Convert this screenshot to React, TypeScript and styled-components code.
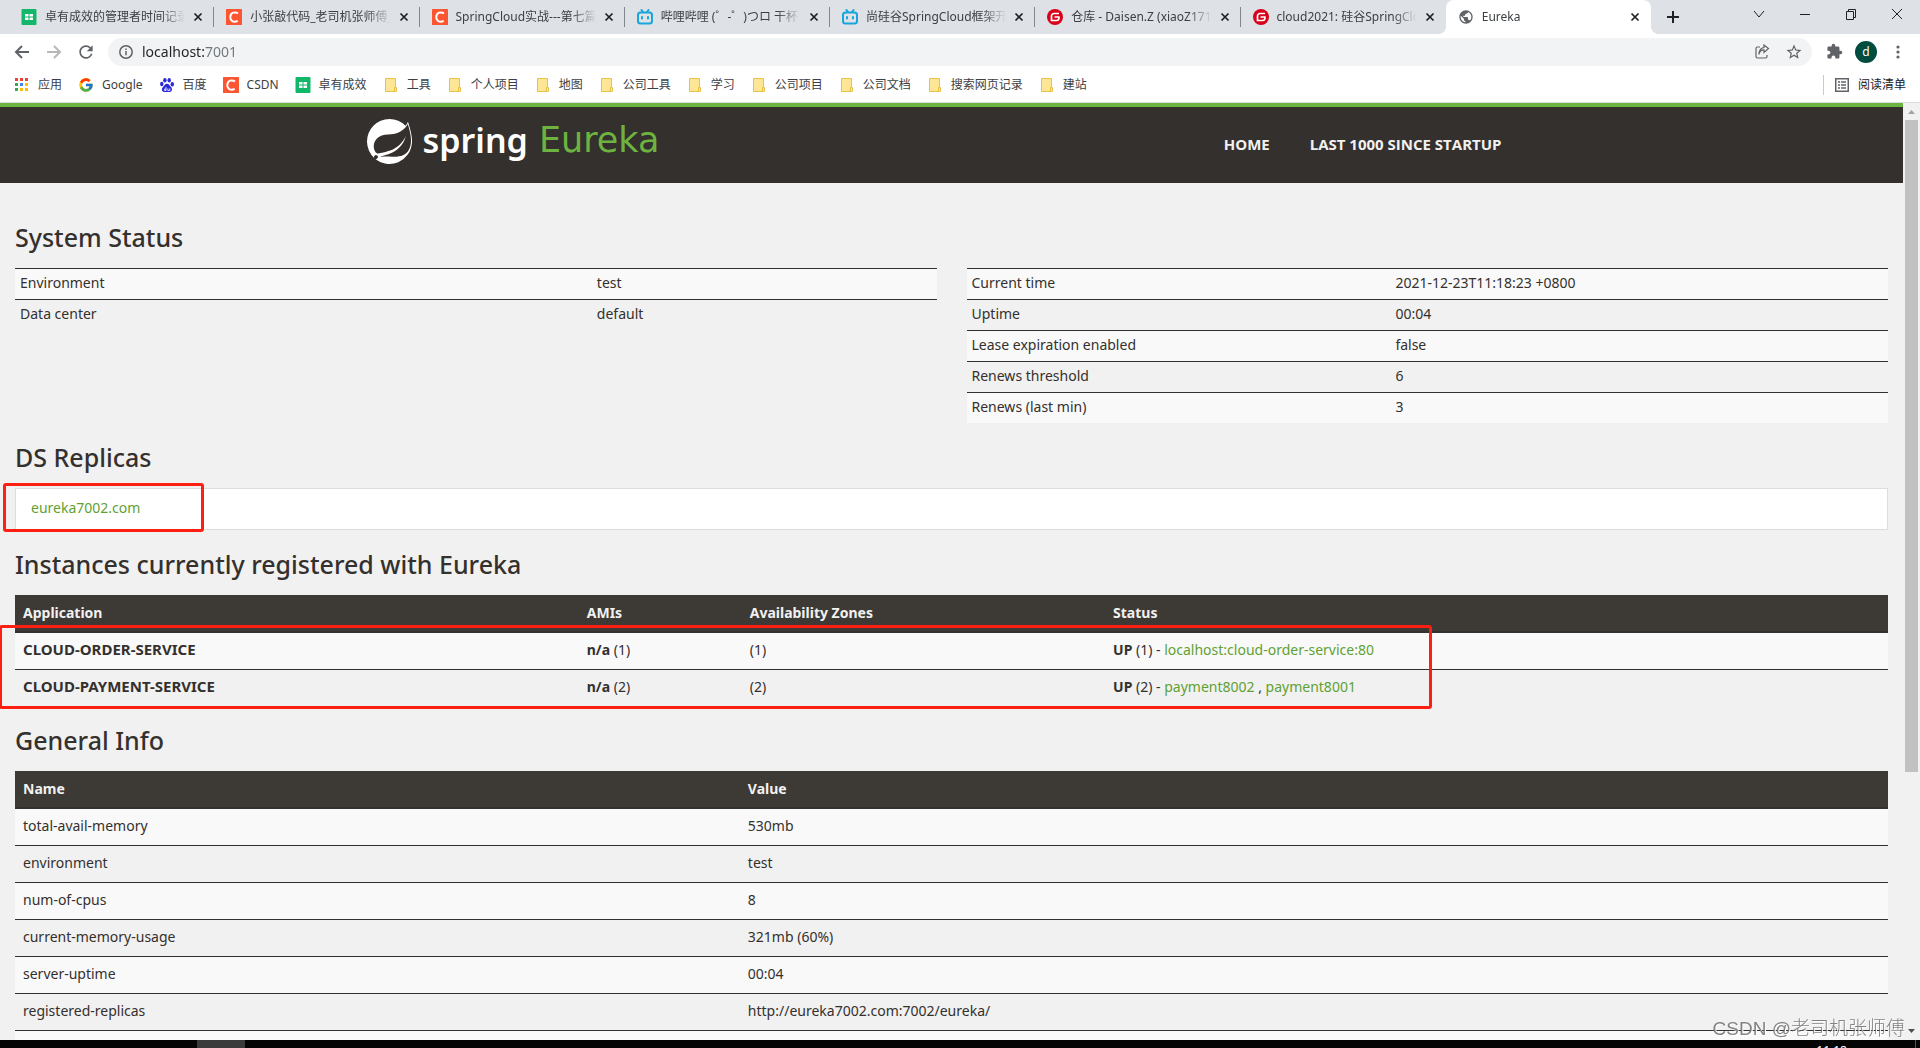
import React from "react";
import styled, { createGlobalStyle, css } from "styled-components";
import { SiSpring } from "react-icons/si";
import { FcGoogle } from "react-icons/fc";
import { MdExtension, MdStarBorder, MdPublic, MdRefresh } from "react-icons/md";

const color = {
  strip: "#dee1e6",
  pill: "#f1f3f4",
  icon: "#5f6368",
  chromeText: "#3c4043",
  page: "#f1f1f1",
  stripe: "#f9f9f9",
  ink: "#34302d",
  head: "#3d3934",
  green: "#6db33f",
  link: "#5fa134",
  mark: "#ff1f12",
};

const GlobalStyle = createGlobalStyle`
  * { box-sizing: border-box; }
  body { margin: 0; background: ${color.page}; }
  button { border: 0; padding: 0; background: none; font: inherit; color: inherit; }
  a { text-decoration: none; }
`;

const Window = styled.div`
  display: flex;
  flex-direction: column;
  height: 100vh;
  overflow: hidden;
  font-family: "Noto Sans", "Noto Sans CJK SC", sans-serif;
`;

/* ---------- browser chrome ---------- */

const TabStrip = styled.div`
  display: flex;
  flex: none;
  height: 34px;
  padding-left: 9px;
  background: ${color.strip};
  color: ${color.chromeText};
  font-size: 12px;
`;

const Tabs = styled.div`
  display: flex;
  flex: 1;
  max-width: 1642px;
`;

const Tab = styled.div<{ $active?: boolean; $divider?: boolean }>`
  position: relative;
  display: flex;
  flex: 1;
  min-width: 0;
  align-items: center;
  padding: 0 8px 0 12px;
  ${(p) =>
    p.$active &&
    css`
      background: #fff;
      border-radius: 8px 8px 0 0;
      &::before,
      &::after {
        content: "";
        position: absolute;
        bottom: 0;
        width: 8px;
        height: 8px;
      }
      &::before {
        left: -8px;
        background: radial-gradient(circle at 0 0, transparent 8px, #fff 8px);
      }
      &::after {
        right: -8px;
        background: radial-gradient(circle at 100% 0, transparent 8px, #fff 8px);
      }
    `}
  ${(p) =>
    p.$divider &&
    css`
      &::after {
        content: "";
        position: absolute;
        right: 0;
        top: 7px;
        width: 1px;
        height: 20px;
        background: #80868b;
      }
    `}
`;

const TabTitle = styled.button`
  flex: 1;
  min-width: 0;
  margin: 0 5px 0 8px;
  overflow: hidden;
  white-space: nowrap;
  text-align: left;
  line-height: 20px;
  mask-image: linear-gradient(to right, #000 calc(100% - 24px), transparent);
`;

const IconButton = styled.button<{ $w?: number }>`
  display: flex;
  flex: none;
  align-items: center;
  justify-content: center;
  width: ${(p) => p.$w ?? 16}px;
  color: ${color.icon};
  &:disabled {
    opacity: 0.45;
  }
`;

const StripButton = styled(IconButton)`
  color: #202124;
`;

const WindowButtons = styled.div`
  display: flex;
  margin-left: auto;
  padding-bottom: 6px;
`;

const Toolbar = styled.div`
  display: flex;
  flex: none;
  align-items: center;
  height: 35px;
  padding: 0 6px;
  background: #fff;
`;

const AddressBar = styled.div`
  display: flex;
  flex: 1;
  align-items: center;
  height: 28px;
  margin: 0 6px;
  padding: 0 2px 0 10px;
  border-radius: 14px;
  background: ${color.pill};
`;

const AddressInput = styled.input`
  flex: 1;
  min-width: 0;
  margin-left: 8px;
  padding: 0;
  border: 0;
  outline: 0;
  font: 14px/20px "Noto Sans", sans-serif;
  background: linear-gradient(to right, #202124 62px, #70757a 62px);
  background-clip: text;
  color: transparent;
`;

const Avatar = styled.button`
  width: 22px;
  height: 22px;
  margin: 0 5px;
  border-radius: 50%;
  background: #004d40;
  color: #fff;
  font-size: 12px;
  line-height: 20px;
`;

const Bookmarks = styled.nav`
  display: flex;
  flex: none;
  align-items: center;
  gap: 16px;
  height: 34px;
  padding: 0 14px 1px;
  border-bottom: 1px solid #dadce0;
  background: #fff;
  font-size: 12px;
`;

const Bookmark = styled.a`
  display: flex;
  align-items: center;
  gap: 8px;
  line-height: 20px;
  color: ${color.chromeText};
  white-space: nowrap;
`;

const ReadingList = styled.button`
  display: flex;
  align-items: center;
  gap: 9px;
  margin-left: auto;
  padding-left: 11px;
  border-left: 1px solid #c8cacd;
  line-height: 20px;
  color: #202124;
`;

/* ---------- viewport ---------- */

const Viewport = styled.div`
  display: flex;
  flex: 1;
  min-height: 0;
`;

const Page = styled.div`
  flex: 1;
  min-width: 0;
  overflow: hidden;
  background: ${color.page};
  color: ${color.ink};
  font-family: "Noto Sans", sans-serif;
  font-size: 14px;
  line-height: 20px;
`;

const ScrollTrack = styled.div`
  display: flex;
  flex-direction: column;
  align-items: center;
  width: 17px;
  background: ${color.page};
`;

const ScrollThumb = styled.div`
  width: 13px;
  flex: 0 0 69.6%;
  margin-bottom: auto;
  background: #c1c1c1;
`;

const Header = styled.header`
  border-top: 4px solid ${color.green};
  background: ${color.ink};
`;

const HeaderInner = styled.div`
  display: flex;
  align-items: center;
  justify-content: space-between;
  max-width: 1170px;
  height: 76px;
  margin: 0 auto;
  padding-bottom: 7px;
`;

const Brand = styled.a`
  display: flex;
  align-items: center;
  gap: 11px;
  color: #fff;
  line-height: 40px;
`;

const BrandName = styled.span`
  padding-bottom: 4px;
  font-size: 34px;
  font-weight: 600;
`;

const BrandProduct = styled.span`
  padding-bottom: 4px;
  font-family: "DejaVu Sans", sans-serif;
  font-size: 35px;
  color: ${color.green};
`;

const Menu = styled.nav`
  display: flex;
  gap: 40px;
  padding: 5px 35px 0 0;
`;

const MenuLink = styled.a`
  color: #f1f1f1;
  font-family: "Open Sans", sans-serif;
  font-size: 15px;
  font-weight: 700;
  text-transform: uppercase;
`;

const Main = styled.main`
  padding: 20px 15px 0;
`;

const Section = styled.section`
  position: relative;
  margin-top: 21px;
`;

const Heading = styled.h1`
  margin: 0 0 18px;
  font-family: "Noto Sans", sans-serif;
  font-size: 25px;
  font-weight: 500;
  line-height: 26px;
`;

const Columns = styled.div`
  display: grid;
  grid-template-columns: 1fr 1fr;
  align-items: start;
  gap: 30px;
`;

const Table = styled.table`
  width: 100%;
  table-layout: fixed;
  border-spacing: 0;
  text-align: left;
  tbody tr:nth-child(odd) {
    background: ${color.stripe};
  }
`;

const StatusTable = styled(Table)`
  td {
    padding: 4px 5px 6px;
    border-top: 1px solid ${color.ink};
  }
`;

const DataTable = styled(Table)`
  th {
    padding: 8px;
    background: ${color.head};
    border-bottom: 2px solid ${color.ink};
    color: #f1f1f1;
  }
  td {
    padding: 7px 8px 9px;
    border-bottom: 1px solid ${color.ink};
  }
`;

const InstanceTable = styled(DataTable)`
  tbody tr:last-child td {
    border-bottom: 0;
  }
`;

const AppName = styled.b`
  font-size: 15px;
  line-height: 1;
`;

const Replicas = styled.ul`
  margin: 0;
  padding: 0;
  list-style: none;
`;

const Replica = styled.li`
  padding: 9px 15px 11px;
  border: 1px solid #ddd;
  background: #fff;
`;

const Link = styled.a`
  color: ${color.link};
`;

const Mark = styled.div<{ $left: number; $top: number; $width: number; $height: number }>`
  position: absolute;
  left: ${(p) => p.$left}px;
  top: ${(p) => p.$top}px;
  width: ${(p) => p.$width}px;
  height: ${(p) => p.$height}px;
  border: 3px solid ${color.mark};
  border-radius: 3px;
  pointer-events: none;
`;

/* ---------- desktop ---------- */

const Taskbar = styled.footer`
  display: flex;
  flex: none;
  height: 8px;
  padding: 0 4px 0 197px;
  overflow: hidden;
  background: #050505;
`;

const TaskItem = styled.div`
  width: 48px;
  background: #3b3b3b;
`;

const Clock = styled.time`
  margin-left: auto;
  padding: 3px 68px 0 0;
  border-right: 1px solid #555;
  color: #fff;
  font-size: 12px;
  line-height: 16px;
`;

const Watermark = styled.div`
  position: fixed;
  right: 15px;
  bottom: 7px;
  color: rgba(110, 110, 110, 0.85);
  font: 19px/24px "Liberation Sans", "Noto Sans CJK SC", sans-serif;
  font-weight: 300;
  text-shadow: 1px 1px 0 #fff;
`;

/* ---------- icons ---------- */

const SheetIcon = () => (
  <svg width="16" height="16" viewBox="0 0 16 16">
    <rect x="0.5" width="15" height="16" rx="1" fill="#12b76a" />
    <path d="M4 5h3.5v2.5H4zM8.5 5H12v2.5H8.5zM4 8.5h3.5V11H4zM8.5 8.5H12V11H8.5z" fill="#fff" />
  </svg>
);

const CsdnIcon = () => (
  <svg width="16" height="16" viewBox="0 0 16 16">
    <rect width="16" height="16" rx="0.5" fill="#fc5531" />
    <path d="M12 4.4C9 2.6 4.6 3.2 4.3 7.9c-.2 4.8 4.1 5.7 7.4 4" fill="none" stroke="#fff" strokeWidth="1.9" />
  </svg>
);

const BilibiliIcon = () => (
  <svg width="16" height="16" viewBox="0 0 16 16" fill="none" stroke="#17a5dc" strokeWidth="2" strokeLinecap="round">
    <path d="M4.5 1l1.5 2M11.5 1L10 3" />
    <rect x="1" y="3.5" width="14" height="11" rx="2.5" />
    <path d="M5 8v1.5M11 8v1.5" />
  </svg>
);

const GiteeIcon = () => (
  <svg width="16" height="16" viewBox="0 0 16 16">
    <circle cx="8" cy="8" r="8" fill="#d8001b" />
    <path d="M12 4.5H7A2.5 2.5 0 0 0 4.5 7v4.5h5.2A2.2 2.2 0 0 0 11.9 9.3V8H7.5" fill="none" stroke="#fff" strokeWidth="1.7" />
  </svg>
);

const BaiduIcon = () => (
  <svg width="16" height="16" viewBox="0 0 16 16" fill="#2a2ad8">
    <ellipse cx="2.8" cy="7" rx="1.7" ry="2.2" />
    <ellipse cx="5.9" cy="3.2" rx="1.7" ry="2.3" />
    <ellipse cx="10.2" cy="3.2" rx="1.7" ry="2.3" />
    <ellipse cx="13.3" cy="7.2" rx="1.7" ry="2.2" />
    <path d="M8 6.8c2 0 2.4 1.8 3.8 3 1.8 1.5 1.6 5-.9 5.2-1.6.1-4 .1-5.8 0-2.6-.2-2.8-3.6-.9-5.2C5.6 8.6 6 6.8 8 6.8z" />
    <path d="M7 10v3.5H5.6V12H7M8.8 11.4v2.1h2v-2.1" fill="none" stroke="#fff" strokeWidth="0.8" />
  </svg>
);

const AppsIcon = () => (
  <svg width="16" height="16" viewBox="0 0 16 16">
    {["#ea4335", "#ea4335", "#ea4335", "#34a853", "#4285f4", "#fbbc04", "#34a853", "#fbbc04", "#fbbc04"].map((fill, i) => (
      <rect key={i} x={1 + (i % 3) * 5} y={1 + Math.floor(i / 3) * 5} width="3" height="3" fill={fill} />
    ))}
  </svg>
);

const FolderIcon = () => (
  <svg width="16" height="16" viewBox="0 0 16 16">
    <path d="M2.5 1.5h10v9h1v4h-11z" fill="#ffe694" stroke="#e8c34a" />
    <path d="M11.5 14v-3.5h1" fill="none" stroke="#e8c34a" />
  </svg>
);

const Stroke = ({ d, size = 16, width = 1 }: { d: string; size?: number; width?: number }) => (
  <svg width={size} height={size} viewBox="0 0 16 16" fill="none" stroke="currentColor" strokeWidth={width}>
    <path d={d} />
  </svg>
);

const InfoIcon = () => (
  <svg width="16" height="16" viewBox="0 0 16 16" fill="none" stroke={color.icon} strokeWidth="1.5">
    <circle cx="8" cy="8" r="6.2" />
    <path d="M8 7v4.2M8 4.5v1.5" />
  </svg>
);

const ListIcon = () => (
  <svg width="14" height="14" viewBox="0 0 14 14" fill="none" stroke={color.icon} strokeWidth="1.5">
    <rect x="0.75" y="0.75" width="12.5" height="12.5" />
    <path d="M3 4h2M6 4h5M3 7h2M6 7h5M3 10h2M6 10h5" />
  </svg>
);

/* ---------- data ---------- */

const tabs = [
  { icon: <SheetIcon />, title: "卓有成效的管理者时间记录" },
  { icon: <CsdnIcon />, title: "小张敲代码_老司机张师傅_" },
  { icon: <CsdnIcon />, title: "SpringCloud实战---第七篇" },
  { icon: <BilibiliIcon />, title: "哔哩哔哩 (゜-゜)つロ 干杯" },
  { icon: <BilibiliIcon />, title: "尚硅谷SpringCloud框架开" },
  { icon: <GiteeIcon />, title: "仓库 - Daisen.Z (xiaoZ171" },
  { icon: <GiteeIcon />, title: "cloud2021: 硅谷SpringClo" },
  { icon: <MdPublic size={16} color={color.icon} />, title: "Eureka" },
];

const bookmarks = [
  { icon: <AppsIcon />, label: "应用" },
  { icon: <FcGoogle size={16} />, label: "Google" },
  { icon: <BaiduIcon />, label: "百度" },
  { icon: <CsdnIcon />, label: "CSDN" },
  { icon: <SheetIcon />, label: "卓有成效" },
  ...["工具", "个人项目", "地图", "公司工具", "学习", "公司项目", "公司文档", "搜索网页记录", "建站"].map((label) => ({
    icon: <FolderIcon />,
    label,
  })),
];

const environment = [
  ["Environment", "test"],
  ["Data center", "default"],
];

const runtime = [
  ["Current time", "2021-12-23T11:18:23 +0800"],
  ["Uptime", "00:04"],
  ["Lease expiration enabled", "false"],
  ["Renews threshold", "6"],
  ["Renews (last min)", "3"],
];

const instances = [
  { name: "CLOUD-ORDER-SERVICE", count: 1, nodes: ["localhost:cloud-order-service:80"] },
  { name: "CLOUD-PAYMENT-SERVICE", count: 2, nodes: ["payment8002", "payment8001"] },
];

const info = [
  ["total-avail-memory", "530mb"],
  ["environment", "test"],
  ["num-of-cpus", "8"],
  ["current-memory-usage", "321mb (60%)"],
  ["server-uptime", "00:04"],
  ["registered-replicas", "http://eureka7002.com:7002/eureka/"],
  ["", ""],
];

const Pairs = ({ rows, first }: { rows: string[][]; first: string }) => (
  <StatusTable>
    <colgroup>
      <col style={{ width: first }} />
      <col />
    </colgroup>
    <tbody>
      {rows.map(([name, value]) => (
        <tr key={name}>
          <td>{name}</td>
          <td>{value}</td>
        </tr>
      ))}
    </tbody>
  </StatusTable>
);

const CLOSE = "M4 4l8 8M12 4l-8 8";

export default function App() {
  return (
    <Window>
      <GlobalStyle />
      <TabStrip>
        <Tabs>
          {tabs.map((tab, i) => (
            <Tab key={tab.title} $active={i === 7} $divider={i < 6}>
              {tab.icon}
              <TabTitle>{tab.title}</TabTitle>
              <StripButton aria-label="Close tab">
                <Stroke d={CLOSE} size={14} width={2} />
              </StripButton>
            </Tab>
          ))}
        </Tabs>
        <StripButton $w={44} aria-label="New tab">
          <Stroke d="M8 2v12M2 8h12" width={2} />
        </StripButton>
        <WindowButtons>
          <StripButton $w={46} aria-label="Search tabs">
            <Stroke d="M3 5l5 6 5-6" />
          </StripButton>
          <StripButton $w={46} aria-label="Minimize">
            <Stroke d="M3 8.5h10" />
          </StripButton>
          <StripButton $w={46} aria-label="Restore">
            <Stroke d="M3.5 5.5h7v8h-7zM5.5 5.5v-2h7v8h-2" />
          </StripButton>
          <StripButton $w={46} aria-label="Close">
            <Stroke d="M3 3l10 10M13 3L3 13" />
          </StripButton>
        </WindowButtons>
      </TabStrip>

      <Toolbar>
        <IconButton $w={32} aria-label="Back">
          <Stroke d="M15 8H2M8 2L2 8l6 6" width={2} />
        </IconButton>
        <IconButton $w={32} aria-label="Forward" disabled>
          <Stroke d="M1 8h13M8 2l6 6-6 6" width={2} />
        </IconButton>
        <IconButton $w={32} aria-label="Reload">
          <MdRefresh size={20} />
        </IconButton>
        <AddressBar>
          <InfoIcon />
          <AddressInput aria-label="Address" defaultValue="localhost:7001" />
          <IconButton $w={32} aria-label="Share">
            <Stroke d="M6 3H3.5Q2 3 2 4.5v8Q2 14 3.5 14h8q1.5 0 1.5-1.5V11M5 10.5C5.5 7 7.5 5.8 10 5.8V8.5l4.5-4L10 1v2.5C7 4 5 6 5 10.5z" width={1.2} />
          </IconButton>
          <IconButton $w={32} aria-label="Bookmark this page">
            <MdStarBorder size={18} />
          </IconButton>
        </AddressBar>
        <IconButton $w={32} aria-label="Extensions">
          <MdExtension size={17} />
        </IconButton>
        <Avatar aria-label="Profile">d</Avatar>
        <IconButton $w={32} aria-label="Menu">
          <svg width="16" height="16" viewBox="0 0 16 16" fill="currentColor">
            <circle cx="8" cy="3" r="1.6" />
            <circle cx="8" cy="8" r="1.6" />
            <circle cx="8" cy="13" r="1.6" />
          </svg>
        </IconButton>
      </Toolbar>

      <Bookmarks>
        {bookmarks.map((b) => (
          <Bookmark key={b.label} href="#">
            {b.icon}
            {b.label}
          </Bookmark>
        ))}
        <ReadingList>
          <ListIcon />
          阅读清单
        </ReadingList>
      </Bookmarks>

      <Viewport>
        <Page>
          <Header>
            <HeaderInner>
              <Brand href="#">
                <SiSpring size={45} />
                <BrandName>spring</BrandName>
                <BrandProduct>Eureka</BrandProduct>
              </Brand>
              <Menu>
                <MenuLink href="#">Home</MenuLink>
                <MenuLink href="#">Last 1000 since startup</MenuLink>
              </Menu>
            </HeaderInner>
          </Header>

          <Main>
            <Section>
              <Heading>System Status</Heading>
              <Columns>
                <Pairs rows={environment} first="62.6%" />
                <Pairs rows={runtime} first="46%" />
              </Columns>
            </Section>

            <Section>
              <Heading>DS Replicas</Heading>
              <Replicas>
                <Replica>
                  <Link href="#">eureka7002.com</Link>
                </Replica>
              </Replicas>
              <Mark $left={-12} $top={39} $width={201} $height={49} />
            </Section>

            <Section>
              <Heading>Instances currently registered with Eureka</Heading>
              <InstanceTable>
                <colgroup>
                  <col style={{ width: "30.1%" }} />
                  <col style={{ width: "8.7%" }} />
                  <col style={{ width: "19.4%" }} />
                  <col />
                </colgroup>
                <thead>
                  <tr>
                    <th>Application</th>
                    <th>AMIs</th>
                    <th>Availability Zones</th>
                    <th>Status</th>
                  </tr>
                </thead>
                <tbody>
                  {instances.map((row) => (
                    <tr key={row.name}>
                      <td>
                        <AppName>{row.name}</AppName>
                      </td>
                      <td>
                        <b>n/a</b> ({row.count})
                      </td>
                      <td>({row.count})</td>
                      <td>
                        <b>UP</b> ({row.count}) -{" "}
                        {row.nodes.map((node, i) => (
                          <React.Fragment key={node}>
                            {i > 0 && " , "}
                            <Link href="#">{node}</Link>
                          </React.Fragment>
                        ))}
                      </td>
                    </tr>
                  ))}
                </tbody>
              </InstanceTable>
              <Mark $left={-16} $top={74} $width={1433} $height={84} />
            </Section>

            <Section>
              <Heading>General Info</Heading>
              <DataTable>
                <colgroup>
                  <col style={{ width: "38.7%" }} />
                  <col />
                </colgroup>
                <thead>
                  <tr>
                    <th>Name</th>
                    <th>Value</th>
                  </tr>
                </thead>
                <tbody>
                  {info.map(([name, value]) => (
                    <tr key={name}>
                      <td>{name || "\u00a0"}</td>
                      <td>{value}</td>
                    </tr>
                  ))}
                </tbody>
              </DataTable>
            </Section>
          </Main>
        </Page>
        <ScrollTrack>
          <svg width="17" height="17" viewBox="0 0 17 17">
            <path d="M5 11h7L8.5 7z" fill="#a3a3a3" />
          </svg>
          <ScrollThumb />
          <svg width="17" height="17" viewBox="0 0 17 17">
            <path d="M5 6h7l-3.5 4z" fill="#505050" />
          </svg>
        </ScrollTrack>
      </Viewport>

      <Taskbar>
        <TaskItem />
        <Clock>11:18</Clock>
      </Taskbar>
      <Watermark>CSDN @老司机张师傅</Watermark>
    </Window>
  );
}
